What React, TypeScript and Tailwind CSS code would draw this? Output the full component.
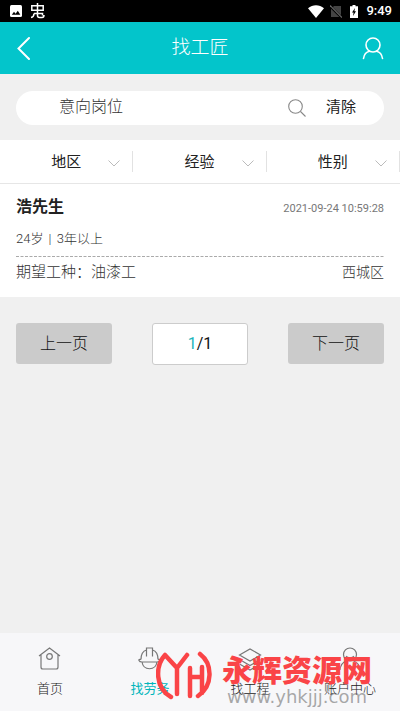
import type { ReactNode } from "react";

interface Worker {
  name: string;
  age: string;
  experience: string;
  trade: string;
  district: string;
  updatedAt: string;
}

const workers: Worker[] = [
  {
    name: "浩先生",
    age: "24岁",
    experience: "3年以上",
    trade: "油漆工",
    district: "西城区",
    updatedAt: "2021-09-24 10:59:28",
  },
];

const filters = ["地区", "经验", "性别"];

const StatusBar = () => (
  <div className="flex h-[22px] items-center justify-between bg-black pl-[10px] pr-2 text-white">
    <div className="flex items-center gap-2">
      <svg width="12" height="12" viewBox="0 0 12 12" aria-hidden="true">
        <rect width="12" height="12" rx="1.5" fill="#fff" />
        <path d="M1.8 9.8l2.2-3 1.6 1.9 2.2-3 2.5 4.1z" fill="#000" />
      </svg>
      <svg width="16" height="16" viewBox="0 0 16 16" fill="none" stroke="#fff" strokeWidth="1.5" aria-hidden="true">
        <path d="M1.800 2.800h11.400v4.400H1.800zM7.500 0v12.500M1 14.500c2-.3 3-1.600 3-4M4 10.500h8.500v2M7.500 12.500c0 1.500.5 2 2 2h2.500c1.500 0 2-.7 2-2.500" />
      </svg>
    </div>
    <div className="flex items-center">
      <svg width="16" height="13" viewBox="0 0 16 13" aria-hidden="true">
        <path d="M0 3.2C4.6-.7 11.4-.7 16 3.2L8 13z" fill="#fff" />
      </svg>
      <svg className="ml-[6px]" width="12" height="13" viewBox="0 0 12 13" aria-hidden="true">
        <path d="M4 1h7v11H1V4z" fill="#444" />
        <path d="M0 1l12 12" stroke="#000" strokeWidth="2.4" />
        <path d="M0 .5l12 12" stroke="#666" strokeWidth="1.2" />
      </svg>
      <svg className="ml-2" width="8" height="13" viewBox="0 0 8 13" aria-hidden="true">
        <path d="M2.5 0h3v1.3H8V13H0V1.3h2.5z" fill="#fff" />
        <path d="M5 3L2 7.4h1.6L3 11l3-4.7H4.4z" fill="#000" />
      </svg>
      <span className="ml-2 font-[Roboto] text-[13px] font-medium leading-4">9:49</span>
    </div>
  </div>
);

const Header = () => (
  <header className="flex h-[52px] items-center justify-between bg-[#03c5cb] px-4 text-white">
    <button type="button" aria-label="返回" className="w-6">
      <svg width="16" height="24" viewBox="0 0 16 24" fill="none" stroke="#fff" strokeWidth="2" strokeLinecap="round">
        <path d="M13 2L2.5 12.5 13 23" />
      </svg>
    </button>
    <h1 className="text-[19px] font-light leading-6">找工匠</h1>
    <button type="button" aria-label="个人中心" className="flex w-6 justify-end">
      <svg width="22" height="24" viewBox="0 0 22 24" fill="none" stroke="#fff" strokeWidth="1.6" strokeLinecap="round">
        <circle cx="11" cy="9" r="7" />
        <path d="M1.500 22.500c.6-4 3-6.700 6-7.300M20.500 22.500c-.6-4-3-6.700-6-7.300" />
      </svg>
    </button>
  </header>
);

const SearchBar = () => (
  <form className="px-4 pb-[15px] pt-[17px]">
    <div className="flex h-[34px] items-center rounded-full bg-white pl-[43px] pr-7">
      <input
        type="text"
        aria-label="意向岗位"
        placeholder="意向岗位"
        className="h-6 min-w-0 flex-1 pb-[2px] text-base font-light leading-6 outline-none placeholder:text-[#333]"
      />
      <button type="submit" aria-label="搜索">
        <svg width="18" height="18" viewBox="0 0 18 18" fill="none" stroke="#888" strokeWidth="1.1">
          <circle cx="7.500" cy="7.500" r="6.800" />
          <path d="M12.500 12.500L17.500 17.500" />
        </svg>
      </button>
      <button type="reset" className="ml-5 pb-[2px] text-[15px] leading-6 text-[#222]">
        清除
      </button>
    </div>
  </form>
);

const FilterBar = () => (
  <div className="grid h-11 grid-cols-3 items-center border-b border-[#e6e6e6] bg-white">
    {filters.map((label) => (
      <button
        key={label}
        type="button"
        className="flex h-[21px] items-center border-r border-[#e2e2e2] text-[15px] leading-5 text-[#222]"
      >
        <span className="flex-1 pl-6">{label}</span>
        <svg className="mr-3 mt-1" width="12" height="7" viewBox="0 0 12 7" fill="none" stroke="#bbb">
          <path d="M.5.500L6 6 11.500.500" />
        </svg>
      </button>
    ))}
  </div>
);

const WorkerCard = ({ worker }: { worker: Worker }) => {
  const { name, age, experience, trade, district, updatedAt } = worker;

  return (
    <article className="bg-white px-4 pb-3 pt-[11px]">
      <div className="flex items-center justify-between">
        <h2 className="text-base font-bold leading-6 text-[#222]">{name}</h2>
        <time className="pt-1 font-[Roboto] text-[11px] leading-4 text-[#777]">{updatedAt}</time>
      </div>
      <p className="mt-[10px] text-[13px] font-light leading-5 text-[#333]">
        {age} <span className="px-[2px]">|</span> {experience}
      </p>
      <svg className="mt-[7px] block h-px w-full" aria-hidden="true">
        <path d="M0 .5h2000" stroke="#aaa" strokeDasharray="3 1.500" />
      </svg>
      <div className="flex h-7 items-center justify-between pt-[2px] text-[15px] font-light leading-6 text-[#333]">
        <span>期望工种：{trade}</span>
        <span className="text-sm">{district}</span>
      </div>
    </article>
  );
};

const Pager = () => (
  <div className="flex items-start justify-between px-4 pt-[26px] text-base font-light leading-6 text-[#111]">
    <button type="button" className="h-[41px] w-24 rounded-[3px] bg-[#cbcbcb]">
      上一页
    </button>
    <div className="flex h-[42px] w-24 items-center justify-center rounded-[3px] border border-[#ccc] bg-white pb-px font-normal">
      <span className="text-[#1cb5bb]">1</span>/1
    </div>
    <button type="button" className="h-[41px] w-24 rounded-[3px] bg-[#cbcbcb]">
      下一页
    </button>
  </div>
);

interface TabProps {
  label: string;
  active?: boolean;
  children: ReactNode;
}

const Tab = ({ label, active, children }: TabProps) => (
  <a
    href="#"
    className={`flex flex-col items-center gap-2 pt-px text-[13px] leading-5 ${active ? "text-[#00b5bb]" : "font-light text-[#222]"}`}
  >
    <svg width="24" height="24" viewBox="0 0 24 24" fill="none" stroke="#777" strokeWidth="1.200" aria-hidden="true">
      {children}
    </svg>
    <span>{label}</span>
  </a>
);

const TabBar = () => (
  <nav className="grid h-[78px] grid-cols-4 bg-[#f7f7f9] pt-[13px]">
    <Tab label="首页">
      <path d="M1 9L11.500 1 22 9M3 7.500V20c0 1.200.6 2 1.800 2h13.400c1.200 0 1.800-.8 1.800-2V7.500" />
      <circle cx="11.500" cy="9.500" r="2.800" />
    </Tab>
    <Tab label="找劳务" active>
      <path d="M3 12.500C3 7 5 4 8.500 3M14.500 3c3.500 1 5.500 4 5.500 9.500M8.500 9.500V1h6v8.500M3 12.500c-1.500-.5-2.500 0-2 1 .5 1.200 1.500 1.500 3 1.500h15c1.500 0 2.500-.3 3-1.500.5-1-.5-1.500-2-1M4 15c1.500 9 13.500 9 15 0" />
    </Tab>
    <Tab label="找工程">
      <path d="M1.500 8L12 2l10.500 6L12 14zM1.500 12.500L12 18.500l10.500-6M1.500 17L12 23l10.500-6" />
    </Tab>
    <Tab label="账户中心">
      <circle cx="12" cy="7.500" r="6.500" />
      <path d="M8 9c1.500 2.300 6.500 2.300 8 0M2 23c.5-5 3-8 6.500-9M22 23c-.5-5-3-8-6.500-9" />
    </Tab>
  </nav>
);

const Watermark = () => (
  <div className="pointer-events-none absolute bottom-0 right-7 flex h-[60px] items-start" aria-hidden="true">
    <svg className="mr-[10px]" width="56" height="50" viewBox="0 0 56 50" fill="none" stroke="#fa4447" strokeWidth="4.500" strokeLinecap="round" strokeLinejoin="round">
      <path d="M15 46C-1 37-1 15 9 4l12 13L31 4M21 17v26" />
      <path d="M34 17v28M34 26h12M46 16v26M44 3c13 10 13 32-2 42" />
    </svg>
    <div className="flex flex-col items-center pt-1">
      <span className="text-[30px] font-black leading-8 text-[#fa4447]">永辉资源网</span>
      <span className="font-['DejaVu_Sans'] text-[18px] leading-5 text-[#555]/50">www.yhkjjj.com</span>
    </div>
  </div>
);

const App = () => (
  <div className="relative flex min-h-screen flex-col bg-[#f0f0f0] font-[Roboto,'Noto_Sans_CJK_SC',sans-serif]">
    <StatusBar />
    <Header />
    <main className="flex-1">
      <SearchBar />
      <FilterBar />
      {workers.map((worker) => (
        <WorkerCard key={worker.name} worker={worker} />
      ))}
      <Pager />
    </main>
    <TabBar />
    <Watermark />
  </div>
);

export default App;
